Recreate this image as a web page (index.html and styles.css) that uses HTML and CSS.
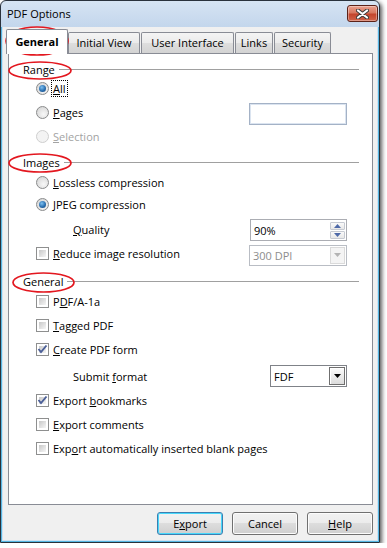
FILE: index.html
```html
<!DOCTYPE html>
<html lang="en">
<head>
  <meta charset="UTF-8" />
  <title>PDF Options</title>
  <link rel="stylesheet" href="styles.css">
</head>
<body>
  <div class="window">
    <div class="titlebar">
      <span class="title">PDF Options</span>
      <div class="close">
        <svg width="13" height="10" viewBox="0 0 13 10">
          <path d="M2 1.5 L11 8.5 M11 1.5 L2 8.5" stroke="#3a3a3a" stroke-width="4" stroke-linecap="round"/>
          <path d="M2 1.5 L11 8.5 M11 1.5 L2 8.5" stroke="#fff" stroke-width="2.2" stroke-linecap="round"/>
        </svg>
      </div>
    </div>

    <div class="client">
      <div class="tabs">
        <div class="tab tab-general active">General</div>
        <div class="tab tab-view">Initial View</div>
        <div class="tab tab-ui">User Interface</div>
        <div class="tab tab-links">Links</div>
        <div class="tab tab-security">Security</div>
      </div>

      <div class="panel">
        <div class="sec-head">Range</div>
        <div class="opt first">
          <span class="radio on"></span><span class="lbl focus"><u>A</u>ll</span>
        </div>
        <div class="opt">
          <span class="radio"></span><span class="lbl"><u>P</u>ages</span>
          <div class="textbox"></div>
        </div>
        <div class="opt">
          <span class="radio disabled"></span><span class="lbl dim"><u>S</u>election</span>
        </div>

        <div class="sec-head sec-images">Images</div>
        <div class="opt">
          <span class="radio"></span><span class="lbl"><u>L</u>ossless compression</span>
        </div>
        <div class="opt tight">
          <span class="radio on"></span><span class="lbl"><u>J</u>PEG compression</span>
        </div>
        <div class="opt indent quality">
          <span class="lbl"><u>Q</u>uality</span>
          <div class="spin">
            <span>90%</span>
            <div class="spin-btns">
              <div class="spin-btn"><svg width="7" height="4" viewBox="0 0 7 4"><path d="M0 4 L3.5 0 L7 4 Z" fill="#4e69a8"/></svg></div>
              <div class="spin-btn"><svg width="7" height="4" viewBox="0 0 7 4"><path d="M0 0 L3.5 4 L7 0 Z" fill="#4e69a8"/></svg></div>
            </div>
          </div>
        </div>
        <div class="opt">
          <span class="check"></span><span class="lbl"><u>R</u>educe image resolution</span>
          <div class="combo combo-dpi disabled">
            <span>300 DPI</span>
            <div class="drop"><svg width="7" height="4" viewBox="0 0 7 4"><path d="M0 0 L3.5 4 L7 0 Z" fill="#b4b4b4"/></svg></div>
          </div>
        </div>

        <div class="sec-head sec-general">General</div>
        <div class="opt">
          <span class="check"></span><span class="lbl">P<u>D</u>F/A-1a</span>
        </div>
        <div class="opt">
          <span class="check"></span><span class="lbl"><u>T</u>agged PDF</span>
        </div>
        <div class="opt">
          <span class="check"><svg width="11" height="11" viewBox="0 0 11 11"><path d="M1.5 5 L4 8 L9.5 1.5" fill="none" stroke="#4b5f98" stroke-width="1.9"/></svg></span><span class="lbl"><u>C</u>reate PDF form</span>
        </div>
        <div class="opt indent submit">
          <span class="lbl">Submit <u>f</u>ormat</span>
          <div class="combo combo-fdf">
            <span>FDF</span>
            <div class="drop"><svg width="7" height="4" viewBox="0 0 7 4"><path d="M0 0 L3.5 4 L7 0 Z" fill="#000"/></svg></div>
          </div>
        </div>
        <div class="opt">
          <span class="check"><svg width="11" height="11" viewBox="0 0 11 11"><path d="M1.5 5 L4 8 L9.5 1.5" fill="none" stroke="#4b5f98" stroke-width="1.9"/></svg></span><span class="lbl">Export <u>b</u>ookmarks</span>
        </div>
        <div class="opt">
          <span class="check"></span><span class="lbl"><u>E</u>xport comments</span>
        </div>
        <div class="opt">
          <span class="check"></span><span class="lbl">Exp<u>o</u>rt automatically inserted blank pages</span>
        </div>
      </div>

      <div class="buttons">
        <div class="btn default">E<u>x</u>port</div>
        <div class="btn">Cancel</div>
        <div class="btn"><u>H</u>elp</div>
      </div>
    </div>
  </div>

  <!-- red annotation marks drawn on top of the screenshot -->
  <svg class="marks" width="387" height="548" viewBox="0 0 387 548">
    <ellipse cx="37" cy="41" rx="31" ry="14"/>
    <ellipse cx="40" cy="70.5" rx="31" ry="8.5"/>
    <ellipse cx="40" cy="163" rx="31" ry="9"/>
    <ellipse cx="43.5" cy="282.5" rx="30.5" ry="9.5"/>
  </svg>
</body>
</html>
```

FILE: styles.css
```css
* {
  box-sizing: border-box;
}
body {
  margin: 0;
  background: #fff;
  font-family: "Open Sans", "Noto Sans", sans-serif;
  font-size: 11px;
  color: #000;
}
.window {
  width: 380px;
  height: 543px;
  border: 1px solid #2a323c;
  border-radius: 6px 6px 0 0;
  padding: 0 1px 1px;
  background: linear-gradient(#d6e4f3, #c3d6ec 26px, #56b6e2 26px);
  box-shadow: 2px 2px 4px rgba(0,0,0,0.65);
  display: flex;
  flex-direction: column;
}
.titlebar {
  height: 26px;
  display: flex;
  align-items: flex-start;
  justify-content: space-between;
  padding-left: 5px;
}
.title {
  line-height: 26px;
}
.close {
  width: 31px;
  height: 17px;
  margin-top: 4px;
  border: 1px solid #5c2218;
  border-radius: 3px;
  background: linear-gradient(#eaa18f, #d77860 45%, #c4452d 55%, #d0644a);
  box-shadow: inset 0 0 0 1px rgba(255,255,255,0.35);
  display: flex;
  align-items: center;
  justify-content: center;
}
.client {
  flex: 1;
  background: #f0f0f0;
  border: 1px solid #cfe2f2;
  border-top: none;
  padding: 2px 4px 0 5px;
  display: flex;
  flex-direction: column;
}

/* tabs */
.tabs {
  height: 24px;
  display: flex;
  align-items: flex-end;
}
.tab {
  height: 21px;
  margin-left: 1px;
  border: 1px solid #898c95;
  border-bottom: none;
  border-radius: 2px 2px 0 0;
  background: linear-gradient(#f4f4f4, #ebebeb 50%, #dedede 50%, #d3d3d3);
  text-align: center;
  line-height: 19px;
}
.tab.active {
  position: relative;
  z-index: 1;
  height: 25px;
  margin-bottom: -1px;
  background: #fff;
  font-weight: bold;
  line-height: 23px;
}
.tab-general { width: 62px; margin-left: -2px; }
.tab-view { width: 72px; margin-left: 0; }
.tab-ui { width: 93px; }
.tab-links { width: 38px; }
.tab-security { width: 57px; }

.panel {
  flex: 1;
  background: #fff;
  border: 1px solid #898c95;
  padding-top: 7px;
}
.sec-head {
  height: 16px;
  display: flex;
  align-items: center;
  padding: 0 13px 0 14px;
}
.sec-head::after {
  content: "";
  flex: 1;
  margin-left: 4px;
  border-top: 1px solid #a0a0a0;
}
.sec-images { margin-top: 6px; }
.sec-general { margin-top: 8px; }

.opt {
  height: 24px;
  display: flex;
  align-items: center;
  padding: 0 25px 0 27px;
}
.opt.first {
  margin-top: -1px;
}
.opt.tight {
  margin-top: -2px;
}
.opt.quality {
  margin-top: 1px;
}
.opt.indent {
  padding-left: 64px;
}
.opt.submit {
  margin-top: 3px;
}
.lbl u {
  text-decoration: underline;
}
.lbl.focus {
  outline: 1px dotted #000;
  margin-left: -1px;
  padding: 0 1px;
  line-height: 15px;
}
.lbl.dim {
  color: #a3a3a3;
}

/* radio buttons and check boxes */
.radio {
  width: 13px;
  height: 13px;
  margin-right: 4px;
  border-radius: 50%;
  border: 1px solid #8a8b8c;
  background: radial-gradient(circle at 60% 65%, #f8f8f8, #e6e6e6 45%, #cfcfcf);
  display: flex;
  align-items: center;
  justify-content: center;
}
.radio.on::after {
  content: "";
  width: 7px;
  height: 7px;
  border-radius: 50%;
  background: radial-gradient(circle at 40% 35%, #7dc0f0, #2a6fb0 55%, #123f72);
}
.radio.disabled {
  border-color: #cfcfcf;
  background: #f3f3f3;
}
.check {
  width: 13px;
  height: 13px;
  margin-right: 4px;
  border: 1px solid #8e8f8f;
  padding: 2px;
  background: linear-gradient(135deg, #c8c8c8, #f6f6f6) content-box, #fff;
}
.check svg {
  display: block;
  margin: -2px;
}

/* inputs */
.textbox {
  margin-left: auto;
  width: 98px;
  height: 22px;
  margin-top: 4px;
  border: 1px solid #a4b2c6;
  box-shadow: inset 0 0 0 1px #dbe4f0;
  background: #fff;
}
.spin {
  margin-left: auto;
  width: 97px;
  height: 22px;
  margin-top: 2px;
  border: 1px solid #abadb3;
  background: #fff;
  display: flex;
  align-items: center;
  padding-left: 3px;
}
.spin-btns {
  margin-left: auto;
  margin-right: 1px;
  width: 15px;
  display: flex;
  flex-direction: column;
  gap: 1px;
}
.spin-btn {
  height: 8px;
  border: 1px solid #c6cad2;
  border-radius: 1px;
  background: linear-gradient(#fafafa, #e8e8e8);
  display: flex;
  align-items: center;
  justify-content: center;
}
.combo {
  margin-left: auto;
  height: 21px;
  background: #fff;
  display: flex;
  align-items: center;
  padding-left: 3px;
}
.combo-dpi {
  width: 98px;
  margin-top: 4px;
  border: 1px solid #b9bdc4;
}
.combo.disabled {
  color: #8d8d8d;
}
.combo .drop {
  margin-left: auto;
  margin-right: 1px;
  width: 15px;
  height: 17px;
  display: flex;
  align-items: center;
  justify-content: center;
}
.combo-dpi .drop {
  border: 1px solid #dadada;
  background: #f4f4f4;
}
.combo-fdf {
  width: 77px;
  height: 22px;
  border: 1px solid #7f8288;
}
.combo-fdf .drop {
  width: 16px;
  height: 18px;
  border: 1px solid #6f6f6f;
  background: linear-gradient(#fbfbfb, #dcdcdc);
  box-shadow: inset 1px 1px #fff;
}

/* dialog buttons */
.buttons {
  height: 23px;
  margin: 7px 0 5px;
  display: flex;
  justify-content: flex-end;
  gap: 9px;
}
.btn {
  width: 66px;
  height: 23px;
  border: 1px solid #707070;
  border-radius: 3px;
  background: linear-gradient(#f2f2f2, #ebebeb 50%, #dddddd 50%, #cfcfcf);
  box-shadow: inset 0 0 0 1px #fcfcfc;
  text-align: center;
  line-height: 21px;
}
.btn.default {
  border-color: #3c7fb1;
  box-shadow: inset 0 0 0 1px #48d8fb;
}

.marks {
  position: absolute;
  top: 0;
  left: 0;
  pointer-events: none;
}
.marks ellipse {
  fill: none;
  stroke: #e3171f;
  stroke-width: 1.7;
}
```
